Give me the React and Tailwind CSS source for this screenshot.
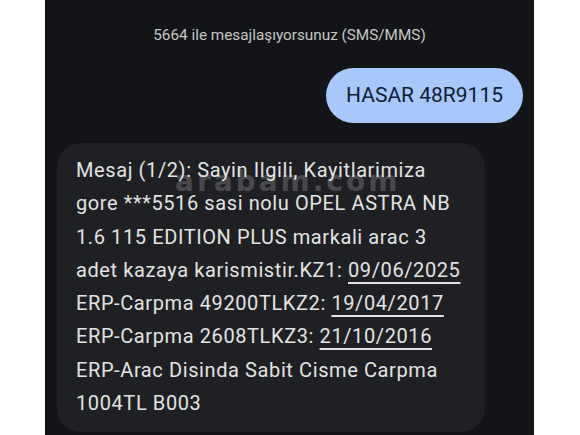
import React from "react";

const LINES = [
    ["Mesaj (1/2): Sayin Ilgili, Kayitlarimiza"],
    ["gore ***5516 sasi nolu OPEL ASTRA NB"],
    ["1.6 115 EDITION PLUS markali arac 3"],
    ["adet kazaya karismistir.KZ1: ", "09/06/2025"],
    ["ERP-Carpma 49200TLKZ2: ", "19/04/2017"],
    ["ERP-Carpma 2608TLKZ3: ", "21/10/2016"],
    ["ERP-Arac Disinda Sabit Cisme Carpma"],
    ["1004TL B003"],
];

export default function App() {
    return (
        <div
            className="w-[580px] h-[435px] bg-white pl-[45px] overflow-hidden"
            style={{ fontFamily: "Roboto, 'Noto Sans', sans-serif" }}
        >
            <div className="w-[489px] h-full bg-[#131418] flex flex-col pt-[25px]">
                <div className="text-center text-[15.3px] leading-5 text-[#c4c7c5]">
                    5664 ile mesajlaşıyorsunuz (SMS/MMS)
                </div>

                {/* sent bubble */}
                <div className="flex justify-end pr-[11px] mt-[23px]">
                    <div className="h-[55px] px-[20px] flex items-center rounded-full bg-[#a8c7fa] text-[#0f1d36] text-[21px]">
                        HASAR 48R9115
                    </div>
                </div>

                {/* received bubble */}
                <div className="pl-[12px] mt-[20px]">
                    <div className="relative w-[428px] rounded-[24px] bg-[#1f2024] pl-[19px] pr-3 pt-[11px] pb-[12px] text-[20px] leading-[33.3px] tracking-[0.6px] text-[#e3e3e3]">
                        {LINES.map(([text, date], i) => (
                            <div key={i} className="whitespace-nowrap">
                                {text}
                                {date && (
                                    <span className="underline decoration-[1.5px] underline-offset-[5px]">
                                        {date}
                                    </span>
                                )}
                            </div>
                        ))}
                        <span className="absolute left-[118px] top-[25px] font-['DejaVu_Sans',sans-serif] text-[28px] leading-none font-bold tracking-[3px] text-white/20 pointer-events-none">
                            arabam.com
                        </span>
                    </div>
                </div>
            </div>
        </div>
    );
}
